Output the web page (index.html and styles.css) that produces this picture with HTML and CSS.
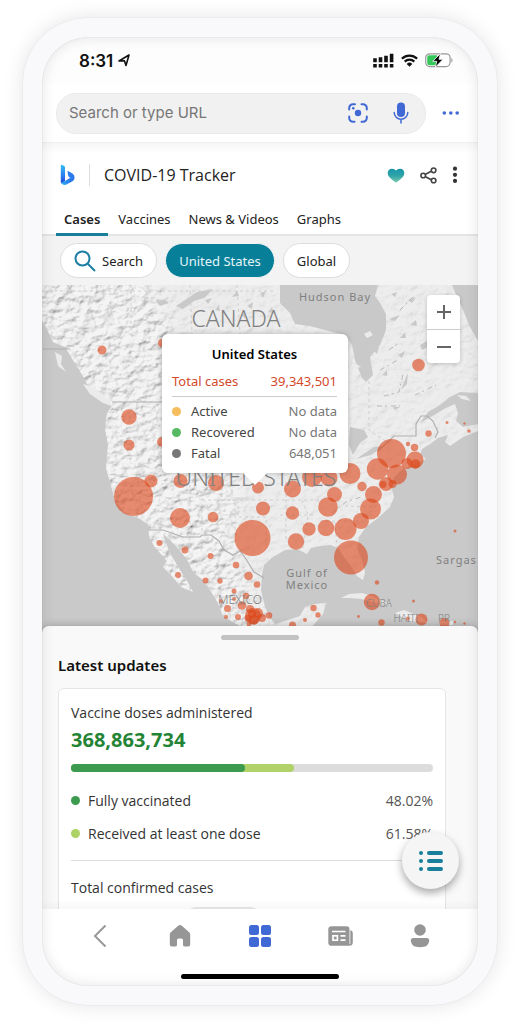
FILE: index.html
```html
<!DOCTYPE html>
<html lang="en">
<head>
<meta charset="utf-8">
<meta name="viewport" content="width=device-width, initial-scale=1">
<title>COVID-19 Tracker</title>
<link rel="stylesheet" href="styles.css">
</head>
<body>
<div class="device">
<div class="screen">
  <div class="status">
    <span class="time">8:31</span>
    <svg class="locate" width="12" height="13" viewBox="0 0 12 13"><path d="M1 7 11 1 8 11.5 6.4 6.8Z" fill="none" stroke="#111" stroke-width="1.6" stroke-linejoin="round"/></svg>
    <div class="indicators">
      <svg width="21" height="15" viewBox="0 0 21 15"><g stroke="#111" stroke-width="3.6"><path d="M2 5.300v4M7.500 4.300v5M13 2.800v6.500M18.600.8v8.500M2 11v3.400M7.500 11v3.400M13 11v3.400M18.600 11v3.400"/></g></svg>
      <svg width="17" height="13" viewBox="0 0 17 13"><g fill="none" stroke="#111" stroke-width="2.2"><path d="M.9 4.6a11 11 0 0 1 15.2 0M3.7 7.6a7 7 0 0 1 9.6 0"/></g><path d="M8.5 12.8 5.7 9.9a4 4 0 0 1 5.6 0Z" fill="#111"/></svg>
      <svg width="28" height="15" viewBox="0 0 28 15"><rect x=".7" y=".8" width="24.4" height="12.8" rx="4" fill="#fff" stroke="#999" stroke-width="1.2"/><path d="M26.4 5v4.6c1.5-.5 1.5-4 0-4.600Z" fill="#999"/><path d="M4.500 2.300H12v10H4.500a2.300 2.300 0 0 1-2.300-2.300V4.600a2.300 2.300 0 0 1 2.300-2.300Z" fill="#35c759"/><path d="M15.500.5 7.700 8.300h4.100l-1.500 6 7.800-8H14Z" fill="#000" stroke="#fff" stroke-width=".8"/></svg>
    </div>
  </div>

  <div class="address">
    <div class="omnibox">
      <input class="url" type="text" placeholder="Search or type URL" aria-label="Search or type URL">
      <button class="icon-btn" aria-label="Visual search"><svg width="20" height="20" viewBox="0 0 20 20"><path d="M7 1.200H5A3.800 3.800 0 0 0 1.200 5v1.500M13.500 1.200H15a3.800 3.800 0 0 1 3.800 3.800v1.500M18.800 13.500V15a3.800 3.800 0 0 1-3.800 3.800h-1.500M6.500 18.800H5A3.800 3.800 0 0 1 1.200 15v-1.500" fill="none" stroke="#4169d6" stroke-width="2" stroke-linecap="round"/><circle cx="10" cy="10" r="3.200" fill="#4169d6"/><circle cx="5.300" cy="5.300" r="1.300" fill="#4169d6"/></svg></button>
      <button class="icon-btn" aria-label="Voice search"><svg width="16" height="22" viewBox="0 0 16 22"><rect x="4" y=".5" width="8" height="14.500" rx="4" fill="#4169d6"/><path d="M1.200 10.500a6.800 6.800 0 0 0 13.600 0M8 17.500V21" fill="none" stroke="#4169d6" stroke-width="1.500" stroke-linecap="round"/></svg></button>
    </div>
    <button class="icon-btn" aria-label="More options"><svg width="18" height="4" viewBox="0 0 18 4" fill="#4169d6"><circle cx="2.300" cy="2" r="1.800"/><circle cx="8.800" cy="2" r="1.800"/><circle cx="15.200" cy="2" r="1.800"/></svg></button>
  </div>

  <header class="head">
    <div class="title-row">
      <svg width="16" height="22" viewBox="0 0 16 22"><defs><linearGradient id="b1" x1="0" y1="0" x2="0" y2="1"><stop offset="0" stop-color="#33bdf5"/><stop offset=".6" stop-color="#2d7cf0"/><stop offset="1" stop-color="#1843d0"/></linearGradient><linearGradient id="b2" x1="1" y1="0" x2="0" y2="1"><stop offset="0" stop-color="#2a7bf2"/><stop offset=".5" stop-color="#2a78ee"/><stop offset="1" stop-color="#2db4f5"/></linearGradient></defs><path d="M1.500.7 4 1.800Q5 2.300 5 3.500V17L1.500 19.500Q.8 18.800.8 17.500V1.200Q.8.500 1.500.7Z" fill="url(#b1)"/><path d="M7.500 7.500Q7.600 6.800 8.500 7.200L12.500 9.500Q14.600 11 14.600 13.500 14.600 16 12.500 17.300L6.500 20.600Q3 22 .9 18.500 2.500 18.700 4.500 17.300L10.500 13.800 9.300 13.200Q8.500 12.500 8.200 11.500Z" fill="url(#b2)"/></svg>
      <h1>COVID-19 Tracker</h1>
      <div class="actions">
      <button class="icon-btn" aria-label="Favourite"><svg width="18" height="15" viewBox="0 0 18 15"><defs><linearGradient id="h" x1="0" y1="0" x2="0" y2="1"><stop offset="0" stop-color="#1795aa"/><stop offset=".5" stop-color="#2ea4a9"/><stop offset="1" stop-color="#7ac9ad"/></linearGradient></defs><path d="M9 14.500Q7.500 14.300 2.500 9.300C-.8 5.800.8.700 4.900.7 6.900.7 8.300 1.500 9 2.700c.7-1.200 2.100-2 4.100-2 4.100 0 5.700 5.100 2.400 8.600Q10.500 14.300 9 14.500Z" fill="url(#h)"/></svg></button>
      <button class="icon-btn" aria-label="Share"><svg width="17" height="17" viewBox="0 0 17 17" fill="none" stroke="#444" stroke-width="1.600"><path d="m5.500 7.300 5.800-3M5.500 9.700l5.800 3"/><circle cx="3.200" cy="8.500" r="2.300"/><circle cx="13.600" cy="3.300" r="2.300"/><circle cx="13.600" cy="13.500" r="2.300"/></svg></button>
      <button class="icon-btn" aria-label="Menu"><svg width="6" height="18" viewBox="0 0 6 18" fill="#333"><circle cx="3" cy="2.700" r="2.100"/><circle cx="3" cy="8.800" r="2.100"/><circle cx="3" cy="14.900" r="2.100"/></svg></button>
      </div>
    </div>
    <nav class="tabs"><a class="active" href="#cases">Cases</a><a href="#vaccines">Vaccines</a><a href="#news">News &amp; Videos</a><a href="#graphs">Graphs</a></nav>
  </header>

  <div class="filters">
    <button class="chip"><svg width="22" height="22" viewBox="0 0 22 22" fill="none" stroke="#1d7ea4" stroke-width="2"><circle cx="8.500" cy="8.500" r="7"/><path d="m13.500 13.500 7.500 7.500"/></svg>Search</button>
    <button class="chip selected">United States</button>
    <button class="chip">Global</button>
  </div>

  <div class="map">
    <svg class="map-art" viewBox="42 285 436 350">
      <defs>
        <filter id="relief" x="0" y="0" width="100%" height="100%"><feTurbulence type="fractalNoise" baseFrequency=".1 .13" numOctaves="5" seed="7"/><feColorMatrix values="0 0 0 0 0 0 0 0 0 0 0 0 0 0 0 1 0 0 0 0"/><feDiffuseLighting surfaceScale="4" diffuseConstant="1.300" lighting-color="#eee"><feDistantLight azimuth="225" elevation="52"/></feDiffuseLighting></filter>
        <filter id="soft"><feGaussianBlur stdDeviation="9"/></filter>
        <path id="land" d="M42 285H478V393L460 392 450 397 440 405 428 412 420 423 434 415 446 408 455 404 458 413 456 421 463 427 478 424V431L463 437 450 446 445 442 448 435 438 438 430 444 422 449 420 454 426 459 415 464 403 469 394 477 391 486 394 497 390 507 378 518 366 527 359 537 357 548 362 560 365 573 363 580 357 576 351 566 344 557 339 549 331 545 320 546 311 548 307 554 297 549 285 550 273 557 264 565 262 574 261 590 265 607 270 618 275 624 291 619 300 616 305 607 314 604 326 603 323 614 316 622 305 635H252L238 625 223 616 218 603 210 590 202 579 194 573 186 558 175 545 163 534 169 551 178 567 187 581 193 592 181 587 171 575 163 567 167 561 154 546 149 536 148 524 138 518 124 513 115 500 110 482 106 468 108 445 105 428 107 413 112 406 103 401 90 390 83 376 73 360 65 347 53 342 45 325 42 321Z"/>
        <clipPath id="land-clip"><use href="#land"/></clipPath>
        <mask id="west"><path d="M20 260H140L180 340 205 380 235 450 240 520 230 545 275 640H20Z" fill="#fff" filter="url(#soft)"/></mask>
      </defs>
      <rect x="42" y="285" width="436" height="350" fill="#c9c9c9"/>
      <use href="#land" fill="#ebebeb"/>
      <g clip-path="url(#land-clip)">
        <rect x="42" y="285" width="436" height="350" filter="url(#relief)" opacity=".1"/>
        <g mask="url(#west)"><rect x="42" y="285" width="250" height="350" filter="url(#relief)" opacity=".42"/></g>
      </g>
      <g fill="#c9c9c9">
        <path d="M280 285V303L290 313 295 324 310 326 325 330 345 335 352 345 355 360 362 378 366 382 373 375 370 357 380 345 386 330 386 314 380 303 375 296 378 285ZM452 285H478V341L470 327 463 310 457 297ZM350 427 364 430 368 437 360 443 353 455 349 445ZM356 459 374 447 384 446 371 455Z"/>
        <path d="m176 306 12-8 9-6 16-3-9 9-10 3-11 8ZM156 301 165 300 169 303 160 306ZM420 345l7-4 1 6-6 3ZM389 319l11-4-5 6ZM400 338l5-6 1 6ZM373 350l6-3-2 7ZM401 390l5-13 2-4-1 11ZM393 407h7l-5 3ZM205 300l7-2-4 6ZM391 294l6-2-2 5ZM408 300l8-3-4 6ZM398 355l7-4-3 7ZM382 375l5-5v6ZM410 325l6-5 1 6Z"/>
        <path d="M215 310l4-5 1 6ZM232 297l5-6 2 5ZM247 306l6-4-1 7ZM260 293l6-2-3 7ZM241 315l4-2v5ZM268 312l4-5 2 6Z"/>
      </g>
      <g fill="#ebebeb">
        <path d="M83 384 93 387 105 396 114 407 103 403 90 394ZM55 352 62 356 61 364 66 372 58 366ZM341 598 349 594 362 593 374 597 389 604 377 603 361 599 350 598ZM395 613 404 610 421 617 428 623 409 621ZM440 621h13v4h-13ZM364 334l6-3 3 4-6 3ZM457 395l9 1 5 5-9-2ZM355 363l6 4-4 1Z"/>
      </g>
      <g fill="none" stroke="#b0b0b0" stroke-width="1.200">
        <path d="M43 349H70M112 402H163M148 530H163L183 537 200 537 202 535H211L219 541 224 550 233 555 240 551 246 559 254 572 264 578"/>
        <path d="M378 451 394 436H416V424L421 416H427L433 421 438 432 435 438"/>
      </g>
      <g fill="none" stroke="#cecece" stroke-dasharray="3 3">
        <path d="M42 291H275M131 285V338M190 285 192 334M237 285 240 334M202 500H235V535M202 498V534M222 476V500H285M238 500V517H266V545M286 482V540M286 500H323M280 515H315M302 500 308 515 303 548M320 521H363M335 522 337 548M345 506 376 507M369 381V430L390 444M163 404V475M155 484H190V530"/>
      </g>
      <g fill="none" stroke="#b9b9b9" stroke-dasharray="5 3 2 4"><path d="m332 513 14-11 15-5M389 350l10-7M380 370l18-10M384 396l15-4 4-18M415 395l21-10M377 406h23M400 310l15-15"/></g>
      <g class="cases">
        <circle cx="102" cy="350" r="4.500"/><circle cx="162" cy="343" r="4"/><circle cx="162" cy="442" r="5"/><circle cx="129" cy="417" r="7.700"/><circle cx="129" cy="445" r="5.500"/><circle cx="133.500" cy="496.500" r="19.500"/><circle cx="151" cy="481" r="6.500"/><circle cx="180.500" cy="481" r="7"/><circle cx="216" cy="483" r="8"/><circle cx="180" cy="518" r="10"/><circle cx="213" cy="517" r="5.300"/><circle cx="159.500" cy="543" r="3"/><circle cx="185" cy="550" r="3.500"/><circle cx="178" cy="575" r="3"/><circle cx="210.500" cy="556" r="3"/><circle cx="236" cy="565" r="3.300"/><circle cx="205.500" cy="580.500" r="3"/><circle cx="220" cy="581" r="2.700"/><circle cx="248.500" cy="576" r="4.300"/><circle cx="234" cy="591" r="2.500"/><circle cx="257" cy="584.500" r="3.300"/><circle cx="221" cy="601" r="2"/><circle cx="234" cy="599" r="2"/><circle cx="246" cy="596" r="3.300"/><circle cx="227.500" cy="608.500" r="3.500"/><circle cx="226" cy="617" r="2"/><circle cx="238" cy="617" r="3"/><circle cx="242" cy="605.500" r="4.300"/>
        <circle cx="253" cy="616" r="8"/><circle cx="250" cy="609" r="4"/><circle cx="258" cy="613" r="5"/><circle cx="254" cy="620" r="5"/><circle cx="248" cy="618" r="3.500"/><circle cx="262" cy="618" r="4"/><circle cx="252" cy="614" r="4"/><circle cx="269" cy="615.500" r="3.300"/><circle cx="249" cy="624" r="2.500"/>
        <circle cx="252.500" cy="538" r="18"/><circle cx="258" cy="487.500" r="6"/><circle cx="263" cy="508.500" r="7"/><circle cx="292.500" cy="489" r="8.500"/><circle cx="292.500" cy="513" r="6.700"/><circle cx="309" cy="529" r="6.700"/><circle cx="326" cy="528" r="8.300"/><circle cx="296" cy="541.500" r="8.200"/><circle cx="345.500" cy="529" r="11"/><circle cx="361" cy="521" r="8"/><circle cx="351" cy="557.500" r="17"/><circle cx="328" cy="507" r="9.800"/><circle cx="334.500" cy="494.500" r="7.500"/><circle cx="370.500" cy="509" r="10.500"/><circle cx="373.500" cy="494.500" r="8.500"/><circle cx="362" cy="486.500" r="4.700"/><circle cx="350" cy="473.500" r="10.500"/><circle cx="312" cy="477" r="10"/><circle cx="329" cy="478" r="8.500"/><circle cx="377.500" cy="469" r="10.700"/><circle cx="391.500" cy="453.500" r="14.500"/><circle cx="397" cy="474.500" r="10"/><circle cx="415" cy="460" r="8.500"/><circle cx="415.500" cy="464" r="4.700"/><circle cx="407" cy="463.500" r="5.500"/><circle cx="386" cy="484" r="7"/><circle cx="383" cy="484.500" r="3.500"/><circle cx="392.500" cy="484" r="4"/><circle cx="418.500" cy="365" r="6.300"/><circle cx="428.500" cy="433.500" r="3.200"/><circle cx="447" cy="422.500" r="1.500"/><circle cx="464.500" cy="423.500" r="1.200"/><circle cx="469" cy="431" r="1.800"/><circle cx="414.500" cy="447.500" r="3.700"/><circle cx="408" cy="444" r="2.200"/>
        <circle cx="455" cy="531" r="1.500"/><circle cx="377" cy="582.500" r="2.200"/><circle cx="372" cy="602" r="8.200"/><circle cx="413.500" cy="601" r="1.500"/><circle cx="358.500" cy="616.500" r="1.400"/><circle cx="381.500" cy="622.500" r="3.200"/><circle cx="421.500" cy="619.500" r="6"/><circle cx="408" cy="618.500" r="2"/><circle cx="444.500" cy="623" r="5"/><circle cx="455" cy="622" r="1.200"/><circle cx="464.500" cy="623.500" r="1.200"/><circle cx="313.500" cy="608" r="3.200"/><circle cx="318" cy="615" r="2.700"/><circle cx="305" cy="620" r="2"/><circle cx="292.500" cy="625" r="3.500"/>
      </g>
      <g class="places">
        <text class="country" x="236" y="327">CANADA</text>
        <text class="country" x="256" y="486">UNITED STATES</text>
        <text class="water" x="335" y="301">Hudson Bay</text>
        <text class="water"><tspan x="307" y="577">Gulf of</tspan><tspan x="307" y="589">Mexico</tspan></text>
        <text class="water edge" x="436" y="564">Sargas</text>
        <text class="region" x="240" y="604">MEXICO</text>
        <text class="small" x="379" y="607">CUBA</text>
        <text class="small" x="406" y="622">HAITI</text>
        <text class="small" x="444" y="622">PR</text>
      </g>
    </svg>
    <div class="zoom">
      <button aria-label="Zoom in"><svg width="16" height="16" viewBox="0 0 16 16"><path d="M1 8h14M8 1v14" stroke="#666" stroke-width="2"/></svg></button>
      <button aria-label="Zoom out"><svg width="16" height="16" viewBox="0 0 16 16"><path d="M1 8h14" stroke="#666" stroke-width="2"/></svg></button>
    </div>
    <div class="popup">
      <h2>United States</h2>
      <div class="total"><span>Total cases</span><span>39,343,501</span></div>
      <div class="stat"><i class="dot amber"></i><span>Active</span><b>No data</b></div>
      <div class="stat"><i class="dot lime"></i><span>Recovered</span><b>No data</b></div>
      <div class="stat"><i class="dot grey"></i><span>Fatal</span><b>648,051</b></div>
    </div>
  </div>

  <main class="sheet">
    <div class="grip"></div>
    <h2>Latest updates</h2>
    <section class="card">
      <h3>Vaccine doses administered</h3>
      <p class="doses">368,863,734</p>
      <div class="bar"><span class="partial" style="width:61.58%"></span><span class="full" style="width:48.02%"></span></div>
      <div class="share"><i class="dot green"></i><span>Fully vaccinated</span><b>48.02%</b></div>
      <div class="share"><i class="dot light"></i><span>Received at least one dose</span><b>61.58%</b></div>
      <h3 class="confirmed">Total confirmed cases</h3>
      <div class="pill"></div>
    </section>
    <button class="fab" aria-label="Contents"><svg width="26" height="22" viewBox="0 0 26 22" stroke="#177f9c" stroke-width="4" stroke-linecap="round"><path d="M11 3h12M11 11h12M11 19h12M3 3h.01M3 11h.01M3 19h.01"/></svg></button>
  </main>

  <footer class="dock">
    <nav class="dock-nav">
      <button aria-label="Back"><svg width="14" height="24" viewBox="0 0 14 24"><path d="M12.500 1.500 2 12l10.500 10.500" fill="none" stroke="#999" stroke-width="2"/></svg></button>
      <button aria-label="Home"><svg width="22" height="24" viewBox="0 0 22 24"><path d="M9.200 1.700a2.700 2.700 0 0 1 3.600 0l7.400 6.500q1 .9 1 2.200v10.200q0 2-2 2h-3.500q-1.700 0-1.700-1.700V16q0-1.500-1.500-1.500h-3Q8 14.500 8 16v4.900q0 1.700-1.700 1.700H2.800q-2 0-2-2V10.400q0-1.300 1-2.200Z" fill="#969696"/></svg></button>
      <button aria-label="Apps"><svg width="22" height="22" viewBox="0 0 22 22" fill="#4169d6"><rect width="10" height="10" rx="2.500"/><rect x="12" width="10" height="10" rx="2.500"/><rect y="12" width="10" height="10" rx="2.500"/><rect x="12" y="12" width="10" height="10" rx="2.500"/></svg></button>
      <button aria-label="News"><svg width="25" height="20" viewBox="0 0 25 20"><path d="M3.500.3h15q3 0 3 3v14.200q0 .8.800.8V4.200q2.500.3 2.500 2.800v9.200q0 3.600-3.600 3.600H3.700Q.3 19.800.3 16.400V3.300q0-3 3.200-3Z" fill="#969696"/><path d="M4 5.500h13.500M12.500 9.800h5M12.500 14.200h5" stroke="#fff" stroke-width="1.700"/><rect x="5" y="9.800" width="4.400" height="4.400" fill="none" stroke="#fff" stroke-width="1.700"/></svg></button>
      <button aria-label="Profile"><svg width="20" height="24" viewBox="0 0 20 24" fill="#969696"><circle cx="10" cy="6" r="5.800"/><path d="M3.300 14h13.400q2.500 0 2.500 2.500 0 6.700-9.200 6.700T.8 16.500Q.8 14 3.300 14Z"/></svg></button>
    </nav>
    <div class="home-bar"></div>
  </footer>
</div>
</div>
</body>
</html>
```
FILE: styles.css
```css
* { box-sizing: border-box; }
body {
  margin: 0;
  height: 100vh;
  padding: 17px 22px 18px;
  background: #fff;
  color: #222;
  font: 13px/20px "Noto Sans", sans-serif;
}
h1, h2, h3, p { margin: 0; }
button { padding: 0; border: 0; background: none; color: inherit; font: inherit; }
svg { display: block; flex: none; }
.device {
  height: 100%;
  padding: 19px;
  border: 1px solid #ececee;
  border-radius: 66px;
  background: #f9f9fb;
  box-shadow: 0 0 20px rgba(0, 0, 0, .1);
}
.screen {
  position: relative;
  display: flex;
  flex-direction: column;
  height: 100%;
  overflow: hidden;
  border-radius: 46px;
  background: #fff;
}
.screen::after {
  content: "";
  position: absolute;
  inset: 0;
  border-radius: inherit;
  box-shadow: inset 0 0 14px rgba(0, 0, 0, .11), inset 0 0 1px rgba(0, 0, 0, .3);
  pointer-events: none;
}
.status {
  display: flex;
  align-items: center;
  height: 47px;
  padding: 0 25px 0 37px;
  background: #fdfdfd;
}
.time { font: 600 17px/24px Inter, sans-serif; color: #111; }
.locate { margin-left: 5px; }
.indicators { display: flex; align-items: center; gap: 7px; margin-left: auto; }
.address {
  display: flex;
  align-items: center;
  gap: 16px;
  height: 58px;
  padding: 0 18px 0 14px;
}
.omnibox {
  display: flex;
  flex: 1;
  align-items: center;
  gap: 25px;
  height: 41px;
  padding: 0 16px 0 12px;
  border: 1px solid #eaeaea;
  border-radius: 20px;
  background: #f1f1f1;
}
.url {
  flex: 1;
  min-width: 0;
  padding: 0;
  border: 0;
  outline: 0;
  background: none;
  font: 15px/24px Inter, sans-serif;
}
.url::placeholder { color: #777; opacity: 1; }
.head {
  border-top: 1px solid #f0f0f0;
  border-bottom: 2px solid #e4e4e4;
  background: linear-gradient(#f6f6f6, #fff 10px);
}
.title-row {
  display: flex;
  align-items: center;
  gap: 13px;
  height: 64px;
  padding: 0 20px 0 18px;
}
.actions { display: flex; align-items: center; gap: 15px; }
h1 {
  flex: 1;
  padding-left: 14px;
  border-left: 1px solid #ddd;
  font: 500 16px/22px "Open Sans", sans-serif;
}
.tabs { display: flex; gap: 2px; padding: 2px 14px 0; margin-bottom: -2px; }
.tabs a {
  padding: 0 8px 4px;
  border-bottom: 3px solid transparent;
  color: #222;
  text-decoration: none;
}
.tabs .active { border-color: #177f9c; font-weight: 600; }
.filters {
  display: flex;
  align-items: center;
  gap: 8px;
  height: 49px;
  padding: 0 18px;
  background: #f3f3f3;
}
.chip {
  display: flex;
  align-items: center;
  gap: 6px;
  height: 35px;
  padding: 0 13px;
  border: 1px solid #ddd;
  border-radius: 18px;
  background: #fff;
}
.selected { border-color: #f3f3f3; background: #087f99; color: #e5f5f8; }
.map { position: relative; }
.map-art { width: 100%; height: auto; }
.cases { fill: #dc4415; fill-opacity: .6; }
.places { fill: #808080; font-family: "Noto Sans", sans-serif; text-anchor: middle; }
.country { font-size: 23px; font-weight: 300; }
.water { font-size: 11px; letter-spacing: 1px; }
.edge { text-anchor: start; }
.region { font-size: 12px; font-weight: 300; }
.small { font-size: 10px; font-weight: 300; }
.zoom {
  position: absolute;
  top: 10px;
  right: 18px;
  width: 33px;
  border-radius: 4px;
  background: #fff;
  box-shadow: 0 1px 4px rgba(0, 0, 0, .2);
}
.zoom button { display: grid; place-items: center; width: 100%; height: 34px; }
.zoom button + button { border-top: 1px solid #ccc; }
.popup {
  position: absolute;
  top: 49px;
  left: 120px;
  width: 186px;
  padding: 10px 11px 9px 10px;
  border-radius: 6px;
  background: #fff;
  box-shadow: 0 0 5px rgba(0, 0, 0, .25);
}
.popup::after {
  content: "";
  position: absolute;
  top: 100%;
  left: 50%;
  margin-left: -12px;
  border: 12px solid transparent;
  border-top-color: #fff;
  border-bottom: 0;
}
.popup h2 { color: #000; font-size: 13px; line-height: 20px; font-weight: 600; text-align: center; }
.total {
  display: flex;
  justify-content: space-between;
  padding: 7px 0 5px;
  margin-bottom: 4px;
  border-bottom: 1px solid #ccc;
  color: #d3492a;
}
.stat { display: flex; align-items: center; color: #444; line-height: 21px; }
.stat span { flex: 1; margin-left: 10px; }
.stat b { font-weight: 400; color: #777; }
.dot { width: 9px; height: 9px; border-radius: 50%; }
.amber { background: #f5bd5d; }
.lime { background: #58b963; }
.grey { background: #777; }
.green { background: #3d9b50; }
.light { background: #acd364; }
.sheet {
  position: relative;
  flex: 1;
  min-height: 0;
  margin-top: -9px;
  padding: 9px 32px 0 16px;
  overflow: hidden;
  border-radius: 7px 7px 0 0;
  background: #f9f9f9;
  box-shadow: 0 0 8px rgba(0, 0, 0, .25);
}
.grip { width: 78px; height: 5px; margin: 0 auto; border-radius: 3px; background: #c2c2c2; transform: translateX(8px); }
.sheet h2 { margin: 14px 0 12px; color: #111; font-size: 15px; line-height: 22px; font-weight: 600; }
.card {
  padding: 13px 12px;
  border: 1px solid #e5e5e5;
  border-radius: 6px;
  background: #fff;
  font: 14px/22px "Open Sans", sans-serif;
}
h3 { font-size: 14px; line-height: 22px; font-weight: 500; color: #333; }
.doses { margin: 2px 0 10px; color: #248436; font: 700 20px/28px "Noto Sans", sans-serif; }
.bar { display: grid; height: 8px; margin-bottom: 12px; border-radius: 4px; background: #dcdcdc; overflow: hidden; }
.bar span { grid-area: 1 / 1; border-radius: 0 4px 4px 0; }
.full { background: #3d9b50; }
.partial { background: #b0d268; }
.share { display: flex; align-items: center; line-height: 33px; }
.share span { flex: 1; margin-left: 8px; font-weight: 500; color: #333; }
.share b { font-weight: 400; color: #555; }
.confirmed { margin-top: 10px; padding-top: 16px; border-top: 1px solid #ddd; }
.pill { width: 74px; height: 20px; margin: 8px 0 0 115px; border-radius: 10px; background: #e8e8e8; }
.fab {
  position: absolute;
  right: 19px;
  bottom: 20px;
  display: grid;
  place-items: center;
  width: 57px;
  height: 57px;
  border-radius: 50%;
  background: #f5f5f5;
  box-shadow: 0 4px 8px rgba(0, 0, 0, .35);
}
.dock { position: relative; background: #fff; box-shadow: 0 -2px 10px rgba(0, 0, 0, .05); }
.dock-nav { display: grid; grid-template-columns: repeat(5, 1fr); padding: 0 18px; }
.dock-nav button { display: grid; place-items: center; height: 54px; }
.home-bar { width: 158px; height: 5px; margin: 11px auto 7px; border-radius: 3px; background: #000; }
```
